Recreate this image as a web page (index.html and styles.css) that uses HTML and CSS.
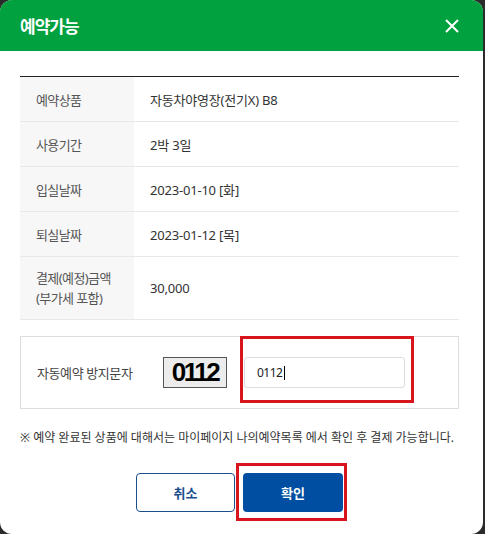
FILE: index.html
```html
<!DOCTYPE html>
<html lang="ko">
<head>
  <meta charset="UTF-8">
  <title>예약가능</title>
  <meta name="viewport" content="width=device-width, initial-scale=1.0">
  <link rel="stylesheet" href="styles.css">
</head>
<body>

  <div class="modal">
    <div class="modal-head">
      <h2>예약가능</h2>
      <button class="close" aria-label="닫기">
        <svg width="14" height="14" viewBox="0 0 14 14"><path d="M1 1L13 13M13 1L1 13" stroke="#fff" stroke-width="2" fill="none"/></svg>
      </button>
    </div>

    <div class="modal-body">
      <table class="info">
        <tr><th>예약상품</th><td>자동차야영장(전기X) B8</td></tr>
        <tr><th>사용기간</th><td>2박 3일</td></tr>
        <tr><th>입실날짜</th><td>2023-01-10 [화]</td></tr>
        <tr><th>퇴실날짜</th><td>2023-01-12 [목]</td></tr>
        <tr class="tall"><th>결제(예정)금액<br>(부가세 포함)</th><td>30,000</td></tr>
      </table>

      <div class="captcha">
        <span class="captcha-label">자동예약 방지문자</span>
        <span class="captcha-img">0112</span>
        <div class="captcha-field">
          <input type="text" value="0112" aria-label="방지문자 입력"><span class="caret"></span>
          <span class="mark mark-input"></span>
        </div>
      </div>

      <p class="note">※ 예약 완료된 상품에 대해서는 마이페이지 나의예약목록 에서 확인 후 결제 가능합니다.</p>

      <div class="btns">
        <button class="btn btn-cancel">취소</button>
        <div class="ok-wrap">
          <button class="btn btn-ok">확인</button>
          <span class="mark mark-ok"></span>
        </div>
      </div>
    </div>
  </div>

</body>
</html>
```

FILE: styles.css
```css
body {
  margin: 0;
  background: #2b2b2b;
  font-family: "Noto Sans", "Noto Sans CJK KR", sans-serif;
  color: #333;
}

.modal {
  width: 483px;
  height: 534px;
  background: #fff;
  border-radius: 12px;
  overflow: hidden;
}

.modal-head {
  height: 51px;
  background: #00a13e;
  display: flex;
  align-items: center;
  justify-content: space-between;
  padding: 0 24px 0 20px;
}

.modal-head h2 {
  margin: 0;
  font-family: "Noto Sans CJK KR", sans-serif;
  font-size: 17px;
  font-weight: 700;
  color: #fff;
  letter-spacing: -1px;
}

.close {
  background: none;
  border: none;
  padding: 0;
  width: 14px;
  height: 14px;
  display: flex;
  cursor: pointer;
}

.modal-body {
  padding: 25px 24px 0 20px;
}

.info {
  width: 100%;
  border-collapse: collapse;
  border-top: 1px solid #222;
  font-size: 13px;
  letter-spacing: -0.2px;
}

.info th,
.info td {
  height: 44px;
  padding: 0 16px;
  border-bottom: 1px solid #e8e8e8;
  text-align: left;
  font-weight: 400;
}

.info th {
  width: 82px;
  background: #f7f7f7;
  color: #555;
  letter-spacing: -0.6px;
}

.info .tall th,
.info .tall td {
  height: 62px;
  line-height: 20px;
}

.captcha {
  margin-top: 16px;
  height: 71px;
  border: 1px solid #ddd;
  display: flex;
  align-items: center;
  padding-left: 16px;
  font-size: 13px;
  letter-spacing: -0.4px;
  color: #444;
}

.captcha-label {
  width: 126px;
}

.captcha-img {
  width: 62px;
  height: 29px;
  background: #ececec;
  border: 1px solid #555;
  font-family: "Liberation Sans", sans-serif;
  font-weight: 700;
  font-size: 26px;
  line-height: 29px;
  letter-spacing: -2.5px;
  color: #000;
  text-align: center;
  box-sizing: content-box;
}

.captcha-field {
  position: relative;
  margin-left: 17px;
  display: flex;
  align-items: center;
}

.captcha-field input {
  width: 161px;
  height: 31px;
  box-sizing: border-box;
  border: 1px solid #ddd;
  border-radius: 3px;
  padding: 0 12px;
  font-family: "Noto Sans", sans-serif;
  font-size: 12px;
  color: #222;
  letter-spacing: -0.5px;
}

.caret {
  position: absolute;
  left: 40px;
  top: 9px;
  width: 1px;
  height: 14px;
  background: #000;
}

.mark {
  position: absolute;
  border: 3px solid #d8141c;
  pointer-events: none;
}

.mark-input {
  left: -4px;
  top: -21px;
  width: 168px;
  height: 61px;
}

.note {
  margin: 19px 0 0;
  font-size: 12px;
  color: #333;
  letter-spacing: 0;
}

.btns {
  margin-top: 27px;
  display: flex;
  justify-content: center;
  gap: 8px;
}

.btn {
  width: 99px;
  height: 39px;
  border-radius: 4px;
  font-family: "Noto Sans CJK KR", sans-serif;
  font-size: 13px;
  font-weight: 700;
  cursor: pointer;
}

.btn-cancel {
  background: #fff;
  border: 1px solid #1c4e8e;
  color: #1c4e8e;
}

.btn-ok {
  background: #004ea1;
  border: none;
  color: #fff;
  width: 100px;
}

.ok-wrap {
  position: relative;
  display: flex;
}

.mark-ok {
  left: -7px;
  top: -10px;
  width: 105px;
  height: 52px;
}
```
